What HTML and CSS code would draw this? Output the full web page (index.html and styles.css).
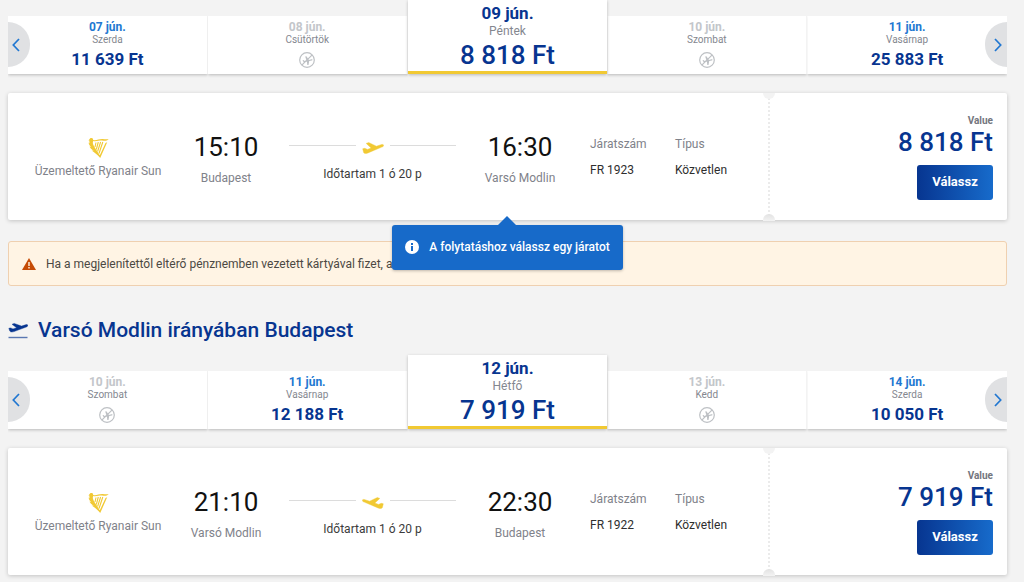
FILE: index.html
```html
<!DOCTYPE html>
<html lang="hu">
<head>
<meta charset="utf-8">
<meta name="viewport" content="width=device-width, initial-scale=1">
<title>Járatválasztás</title>
<link rel="stylesheet" href="styles.css">
</head>
<body>
<svg class="sprite" aria-hidden="true">
  <symbol id="left" viewBox="0 0 8 14"><path d="M7 1 1.300 7 7 13" fill="none" stroke="currentColor" stroke-width="1.700"/></symbol>
  <symbol id="right" viewBox="0 0 8 14"><path d="M1 1l5.700 6L1 13" fill="none" stroke="currentColor" stroke-width="1.700"/></symbol>
  <symbol id="no-flight" viewBox="0 0 16 16">
    <circle cx="8" cy="8" r="7.300" fill="none" stroke="currentColor" stroke-width="1.200"/>
    <path d="M13.200 2.800 2.800 13.200" stroke="currentColor" stroke-width="1.200"/>
    <path d="M3.500 8.200l1-.1 1 .9 2-.5-1.300-4 1.200-.2 2.500 3.600 2.600-.7c1.300-.3 1.500.8.300 1.200l-2.600.7-.7 3.800-1.200.2-.4-3.500-3 .8z" fill="currentColor"/>
  </symbol>
  <symbol id="harp" viewBox="0 0 21 21">
    <path d="M2.200.8C4 0 5.400 1 5.100 2.400c2.800.9 5.900-.9 9.400-.8 2.300 0 4 .5 6.200.1-1.600 1.500-3.600 1.800-5.600 1.500-3.700-.5-6.600 1.200-9.800.4-.6 1-.7 2.300.1 4 1 2.300 3.800 6.100 6.400 10.200l5.700-12.400 1.700-.6-7 15.800C9.400 16.700 5.600 14.500 3.600 13l2.100.3C3.700 12 2 10.400 1.400 9l1.700.7C1.600 8 .6 6.500.7 5l1.200 1C1.100 4.600 1.200 3.900 1.700 3.300L.5 3.100z" fill="currentColor"/>
    <path d="M8 5 7 9.500M10.300 4.500l-2 7.500M12.600 4.500l-3 9.500M14.800 4.500l-3.800 11.500" fill="none" stroke="currentColor" stroke-width="1.100"/>
  </symbol>
  <symbol id="plane" viewBox="0 0 22 12">
    <path d="M.7 6.800l2.100-.5 2.700 1.100 3.600-1.400-4.900-4.600L6.700.5l7.700 3.700 4.600-1.500c1.500-.5 2.500-.3 2.600.5.100.9-.7 1.500-1.800 1.900L6 10.900c-2 .7-3.700.8-4.300-.2z" fill="currentColor" stroke="currentColor" stroke-width=".4"/>
  </symbol>
  <symbol id="takeoff" viewBox="0 0 20 17">
    <path d="M.8 6.300l1.900-.4L5 6.900l3.600-1.200L4 2.300l2.200-.9 7.300 2.700 4-1.300c1.300-.4 2.200-.2 2.300.5.100.8-.5 1.300-1.500 1.700L6 9.600c-2 .6-3.600.5-4.200-.5z" fill="currentColor" stroke="currentColor" stroke-width=".4"/>
    <path d="M.5 15.500h19" stroke="currentColor" stroke-width="1.400" opacity=".65"/>
  </symbol>
</svg>
<main class="page">
  <nav class="days" aria-label="Odaút napja">
    <button class="arrow arrow-prev" aria-label="Előző napok"><svg><use href="#left"/></svg></button>
    <button class="day"><span class="date">07 jún.</span><span class="weekday">Szerda</span><span class="fare">11 639 Ft</span></button>
    <button class="day" disabled><span class="date">08 jún.</span><span class="weekday">Csütörtök</span><svg class="none"><use href="#no-flight"/></svg></button>
    <button class="day active" aria-current="date"><span class="date">09 jún.</span><span class="weekday">Péntek</span><span class="fare">8 818 Ft</span></button>
    <button class="day" disabled><span class="date">10 jún.</span><span class="weekday">Szombat</span><svg class="none"><use href="#no-flight"/></svg></button>
    <button class="day"><span class="date">11 jún.</span><span class="weekday">Vasárnap</span><span class="fare">25 883 Ft</span></button>
    <button class="arrow arrow-next" aria-label="Következő napok"><svg><use href="#right"/></svg></button>
  </nav>

  <article class="card">
    <div class="journey">
      <div class="airline"><svg class="harp"><use href="#harp"/></svg><span>Üzemeltető Ryanair Sun</span></div>
      <div class="stop"><time>15:10</time><span>Budapest</span></div>
      <div class="duration"><div class="track"><svg><use href="#plane"/></svg></div><span>Időtartam 1 ó 20 p</span></div>
      <div class="stop"><time>16:30</time><span>Varsó Modlin</span></div>
      <dl class="facts"><div><dt>Járatszám</dt><dd>FR 1923</dd></div><div><dt>Típus</dt><dd>Közvetlen</dd></div></dl>
    </div>
    <div class="offer"><span class="plan">Value</span><span class="price">8 818 Ft</span><button class="select">Válassz</button></div>
    <div class="tooltip" role="status">
      <svg viewBox="0 0 14 14"><circle cx="7" cy="7" r="7" fill="#fff"/><path d="M6 6h2v5H6zM6 3h2v2H6z" fill="#176ac9"/></svg>
      A folytatáshoz válassz egy járatot
    </div>
  </article>

  <div class="alert">
    <svg viewBox="0 0 14 12"><path d="M7 0l7 12H0z" fill="#c54b05"/><path d="M6.300 4h1.400v4H6.300zM6.300 9h1.400v1.400H6.300z" fill="#fff4e4"/></svg>
    <span>Ha a megjelenítettől eltérő pénznemben vezetett kártyával fizet, a</span>
  </div>

  <h2 class="heading"><svg><use href="#takeoff"/></svg>Varsó Modlin irányában Budapest</h2>

  <nav class="days" aria-label="Visszaút napja">
    <button class="arrow arrow-prev" aria-label="Előző napok"><svg><use href="#left"/></svg></button>
    <button class="day" disabled><span class="date">10 jún.</span><span class="weekday">Szombat</span><svg class="none"><use href="#no-flight"/></svg></button>
    <button class="day"><span class="date">11 jún.</span><span class="weekday">Vasárnap</span><span class="fare">12 188 Ft</span></button>
    <button class="day active" aria-current="date"><span class="date">12 jún.</span><span class="weekday">Hétfő</span><span class="fare">7 919 Ft</span></button>
    <button class="day" disabled><span class="date">13 jún.</span><span class="weekday">Kedd</span><svg class="none"><use href="#no-flight"/></svg></button>
    <button class="day"><span class="date">14 jún.</span><span class="weekday">Szerda</span><span class="fare">10 050 Ft</span></button>
    <button class="arrow arrow-next" aria-label="Következő napok"><svg><use href="#right"/></svg></button>
  </nav>

  <article class="card">
    <div class="journey">
      <div class="airline"><svg class="harp"><use href="#harp"/></svg><span>Üzemeltető Ryanair Sun</span></div>
      <div class="stop"><time>21:10</time><span>Varsó Modlin</span></div>
      <div class="duration back"><div class="track"><svg><use href="#plane"/></svg></div><span>Időtartam 1 ó 20 p</span></div>
      <div class="stop"><time>22:30</time><span>Budapest</span></div>
      <dl class="facts"><div><dt>Járatszám</dt><dd>FR 1922</dd></div><div><dt>Típus</dt><dd>Közvetlen</dd></div></dl>
    </div>
    <div class="offer"><span class="plan">Value</span><span class="price">7 919 Ft</span><button class="select">Válassz</button></div>
  </article>
</main>
</body>
</html>
```
FILE: styles.css
```css
* { box-sizing: border-box; }
body { margin: 0; background: #f3f3f3; color: #2e2e2e; font: 12px/16px Roboto, "Liberation Sans", sans-serif; }
button { border: 0; padding: 0; font: inherit; cursor: pointer; }
.sprite { position: absolute; width: 0; height: 0; }
.page { padding: 0 17px 0 8px; }

/* Day carousel */
.days { position: relative; display: grid; grid-template-columns: repeat(5, 1fr); align-items: end; margin-bottom: 19px; }
.day { display: flex; flex-direction: column; align-items: center; height: 58px; padding-top: 4px; background: #fff; border-right: 1px solid #f3f3f3; box-shadow: 0 1px 3px rgba(0, 0, 0, .24); clip-path: inset(0 0 -5px 0); }
.day:nth-last-child(2) { border-right: 0; }
.date { color: #2177d1; font-size: 12px; line-height: 14px; font-weight: 700; }
.weekday { color: #84878f; font-size: 10px; line-height: 12px; font-weight: 400; }
.fare { margin-top: 3px; color: #073590; font-size: 17px; line-height: 20px; font-weight: 700; }
.day:disabled .date { color: #c3c6ca; }
.none { width: 16px; height: 16px; margin-top: 6px; color: #bdc0c4; }
.day.active { z-index: 1; height: 74px; padding-top: 3px; border-right: 0; border-bottom: 3px solid #f1c933; box-shadow: 0 1px 3px rgba(0, 0, 0, .24); clip-path: none; }
.active .date { color: #073590; font-size: 17px; line-height: 20px; font-weight: 700; }
.active .weekday { font-size: 12px; line-height: 17px; }
.active .fare { margin-top: 0; font-size: 26px; line-height: 30px; font-weight: 500; }
.arrow { position: absolute; z-index: 2; top: 22px; width: 22px; height: 45px; display: flex; align-items: center; background: #e0e1e3; color: #2177d1; }
.arrow svg { width: 8px; height: 14px; }
.arrow-prev { left: 0; padding-left: 4px; border-radius: 0 22px 22px 0; }
.arrow-next { right: 0; padding-left: 9px; border-radius: 22px 0 0 22px; }

/* Flight card */
.card { position: relative; display: flex; min-height: 127px; margin-bottom: 21px; background: #fff; border-radius: 2px; box-shadow: 0 1px 4px rgba(0, 0, 0, .2); }
.journey { flex: 1; display: grid; grid-template-columns: 180px 76px 1fr 78px 209px; padding-top: 38px; color: #7f828a; text-align: center; white-space: nowrap; }
.airline { display: flex; flex-direction: column; align-items: center; gap: 4px; padding-top: 6px; }
.harp { width: 21px; height: 22px; color: #f1c933; }
.stop { display: flex; flex-direction: column; align-items: center; gap: 7px; }
.stop time { color: #111; font-size: 26px; line-height: 32px; }
.duration { padding: 9px 25px 0; color: #3b3b3b; }
.track { display: flex; gap: 6px; margin-bottom: 10px; }
.track::before, .track::after { content: ""; flex: 1; height: 1px; margin-top: 5px; background: #dcdcdc; }
.track svg { width: 22px; height: 16px; color: #f1c933; }
.back svg { transform: scaleX(-1); }
.facts { display: grid; grid-template-columns: 85px 1fr; margin: 0; padding: 5px 0 0 31px; text-align: left; }
.facts dd { margin: 10px 0 0; color: #2e2e2e; }
.offer { position: relative; width: 239px; padding: 21px 14px 0 0; display: flex; flex-direction: column; align-items: flex-end; border-left: 2px dotted #ebebeb; }
.offer::before, .offer::after { content: ""; position: absolute; left: -7px; width: 12px; height: 6px; background: #f3f3f3; }
.offer::before { top: 0; border-radius: 0 0 6px 6px; }
.offer::after { bottom: -1px; height: 7px; border-radius: 6px 6px 0 0; background: linear-gradient(#e2e2e2, #f3f3f3); }
.plan { color: #73767e; font-size: 10px; line-height: 14px; font-weight: 700; }
.price { color: #073590; font-size: 26px; line-height: 28px; font-weight: 500; }
.select { width: 76px; height: 35px; margin-top: 9px; padding-bottom: 1px; border-radius: 3px; background: linear-gradient(90deg, #073590, #176bcb); color: #fff; font-size: 13px; font-weight: 700; }
.tooltip { position: absolute; z-index: 3; top: calc(100% + 5px); left: 0; right: 0; width: fit-content; height: 45px; margin: 0 auto; padding: 0 13px 2px; display: flex; align-items: center; gap: 10px; border-radius: 3px; background: #176ac9; color: #fff; font-weight: 500; white-space: nowrap; box-shadow: 0 1px 3px rgba(0, 0, 0, .25); }
.tooltip svg { width: 14px; height: 14px; }
.tooltip::before { content: ""; position: absolute; top: -9px; left: calc(50% - 9px); border: 9px solid transparent; border-top: 0; border-bottom-color: #176ac9; }

.alert { display: flex; align-items: center; gap: 10px; height: 45px; padding: 0 13px; border: 1px solid #efd0b0; border-radius: 3px; background: #fff4e4; color: #4c4943; }
.alert svg { width: 14px; height: 12px; }
.heading { display: flex; align-items: center; gap: 10px; margin: 30px 0 11px; color: #073590; font-size: 21px; line-height: 28px; font-weight: 500; }
.heading svg { width: 20px; height: 17px; }
```
